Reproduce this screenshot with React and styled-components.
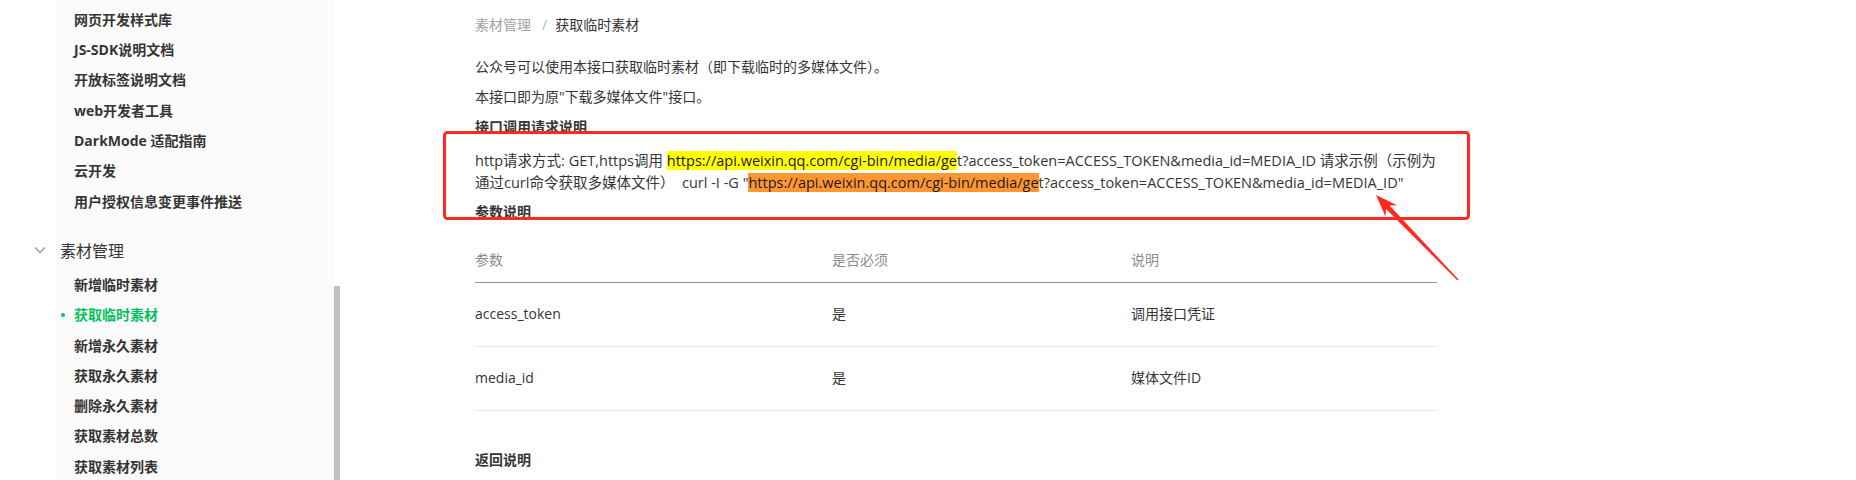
import React from 'react';
import styled, { createGlobalStyle, css } from 'styled-components';

const GlobalStyle = createGlobalStyle`
  html, body { margin: 0; padding: 0; background: #ffffff; }
  body {
    font-family: "Open Sans", "Noto Sans CJK SC", sans-serif;
    color: #353535;
  }
`;

const Page = styled.div`
  position: relative;
  display: flex;
  width: 1856px;
  height: 480px;
  overflow: hidden;
  background: #ffffff;
`;

const Sidebar = styled.aside`
  display: flex;
  flex-shrink: 0;
  width: 340px;
  height: 100%;
`;

const Gutter = styled.div`
  width: 57px;
  flex-shrink: 0;
`;

const NavPanel = styled.nav`
  width: 277px;
  flex-shrink: 0;
  box-sizing: border-box;
  padding-top: 4.85px;
  background: #fbfbfb;
`;

const NavItem = styled.div`
  position: relative;
  height: 30.3px;
  line-height: 30.3px;
  padding-left: 17px;
  font-size: 14px;
  font-weight: 700;
  white-space: nowrap;
  color: ${(p) => (p.$active ? '#07c160' : '#353535')};
  ${(p) =>
    p.$active &&
    css`
      &::before {
        content: '';
        position: absolute;
        left: 4px;
        top: 50%;
        width: 4px;
        height: 4px;
        margin-top: -2px;
        border-radius: 50%;
        background: #07c160;
      }
    `}
`;

const GroupHeader = styled.div`
  display: flex;
  align-items: center;
  gap: 12px;
  height: 40px;
  margin: 13px 0 0 -25px;
  font-size: 16px;
  color: #353535;
`;

const ScrollTrack = styled.div`
  width: 6px;
  flex-shrink: 0;
  display: flex;
  flex-direction: column;
`;

const ScrollThumb = styled.div`
  margin-top: 286px;
  flex: 1;
  background: #c1c1c1;
`;

const Main = styled.main`
  flex: 1;
  box-sizing: border-box;
  padding: 14px 0 0 135px;
`;

const Content = styled.div`
  width: 962px;
`;

const Breadcrumb = styled.div`
  display: flex;
  align-items: center;
  height: 22px;
  line-height: 22px;
  font-size: 14px;
  margin-bottom: 20px;
`;

const Crumb = styled.span`
  color: ${(p) => (p.$current ? '#353535' : '#a3a3a3')};
`;

const CrumbSep = styled.span`
  margin: 0 8px 0 11px;
  color: #b5b5b5;
`;

const Para = styled.p`
  margin: 0 0 8px;
  font-size: 14px;
  line-height: 22px;
  font-weight: ${(p) => (p.$strong ? 700 : 400)};
  color: #353535;
`;

const RequestText = styled.p`
  margin: 12px 0 0;
  font-size: 14.5px;
  line-height: 22px;
  white-space: nowrap;
  color: #353535;
`;

const Mark = styled.mark`
  color: #1a1a1a;
  background: ${(p) => (p.$tone === 'active' ? '#ff9632' : '#ffff00')};
`;

const SubTitle = styled.h4`
  margin: 7px 0 0;
  font-size: 14px;
  line-height: 22px;
  font-weight: 700;
  color: #353535;
`;

const Table = styled.table`
  width: 962px;
  margin-top: 16px;
  border-collapse: collapse;
  table-layout: fixed;
  font-size: 14px;
`;

const Th = styled.th`
  width: ${(p) => p.$w || 'auto'};
  padding: 10px 0 11px;
  line-height: 22px;
  text-align: left;
  font-weight: 400;
  color: #8c8c8c;
  border-bottom: 1px solid #8f8f8f;
`;

const Td = styled.td`
  padding: 20px 0 21px;
  line-height: 22px;
  color: #353535;
  border-bottom: 1px solid #e5e5e5;
`;

const SectionTitle = styled.h4`
  margin: 38px 0 0;
  font-size: 14px;
  line-height: 22px;
  font-weight: 700;
  color: #353535;
`;

const Annotation = styled.svg`
  position: absolute;
  left: 0;
  top: 0;
  pointer-events: none;
`;

const topItems = [
  '网页开发样式库',
  'JS-SDK说明文档',
  '开放标签说明文档',
  'web开发者工具',
  'DarkMode 适配指南',
  '云开发',
  '用户授权信息变更事件推送',
];

const subItems = [
  '新增临时素材',
  '获取临时素材',
  '新增永久素材',
  '获取永久素材',
  '删除永久素材',
  '获取素材总数',
  '获取素材列表',
];

const params = [
  ['access_token', '是', '调用接口凭证'],
  ['media_id', '是', '媒体文件ID'],
];

const URL = 'https://api.weixin.qq.com/cgi-bin/media/ge';
const QUERY = 't?access_token=ACCESS_TOKEN&media_id=MEDIA_ID';

export default function App() {
  return (
    <Page>
      <GlobalStyle />
      <Sidebar>
        <Gutter />
        <NavPanel>
          {topItems.map((t) => (
            <NavItem key={t}>{t}</NavItem>
          ))}
          <GroupHeader>
            <svg width="16" height="16" viewBox="0 0 16 16">
              <path d="M3 5.5l5 5 5-5" fill="none" stroke="#9a9a9a" strokeWidth="1.3" />
            </svg>
            <span>素材管理</span>
          </GroupHeader>
          {subItems.map((t) => (
            <NavItem key={t} $active={t === '获取临时素材'}>
              {t}
            </NavItem>
          ))}
        </NavPanel>
        <ScrollTrack>
          <ScrollThumb />
        </ScrollTrack>
      </Sidebar>

      <Main>
        <Content>
          <Breadcrumb>
            <Crumb>素材管理</Crumb>
            <CrumbSep>/</CrumbSep>
            <Crumb $current>获取临时素材</Crumb>
          </Breadcrumb>
          <Para>公众号可以使用本接口获取临时素材（即下载临时的多媒体文件）。</Para>
          <Para>本接口即为原"下载多媒体文件"接口。</Para>
          <Para $strong>接口调用请求说明</Para>
          <RequestText>
            http请求方式: GET,https调用 <Mark>{URL}</Mark>
            {QUERY} 请求示例（示例为
            <br />
            通过curl命令获取多媒体文件）{'\u00a0 '}curl -I -G "<Mark $tone="active">{URL}</Mark>
            {QUERY}"
          </RequestText>
          <SubTitle>参数说明</SubTitle>
          <Table>
            <thead>
              <tr>
                <Th $w="357px">参数</Th>
                <Th $w="299px">是否必须</Th>
                <Th>说明</Th>
              </tr>
            </thead>
            <tbody>
              {params.map((r) => (
                <tr key={r[0]}>
                  {r.map((c, i) => (
                    <Td key={i}>{c}</Td>
                  ))}
                </tr>
              ))}
            </tbody>
          </Table>
          <SectionTitle>返回说明</SectionTitle>
        </Content>
      </Main>

      <Annotation width="1856" height="480" viewBox="0 0 1856 480">
        <rect x="444.5" y="132.5" width="1024" height="86" rx="3" fill="none" stroke="#ff2a1f" strokeWidth="3" />
        <polygon
          points="1376,195 1397.1,205.3 1389.6,205.5 1458.5,279.5 1457.5,280.5 1386,208.9 1385.5,216.4"
          fill="#ff2a1f"
        />
      </Annotation>
    </Page>
  );
}
